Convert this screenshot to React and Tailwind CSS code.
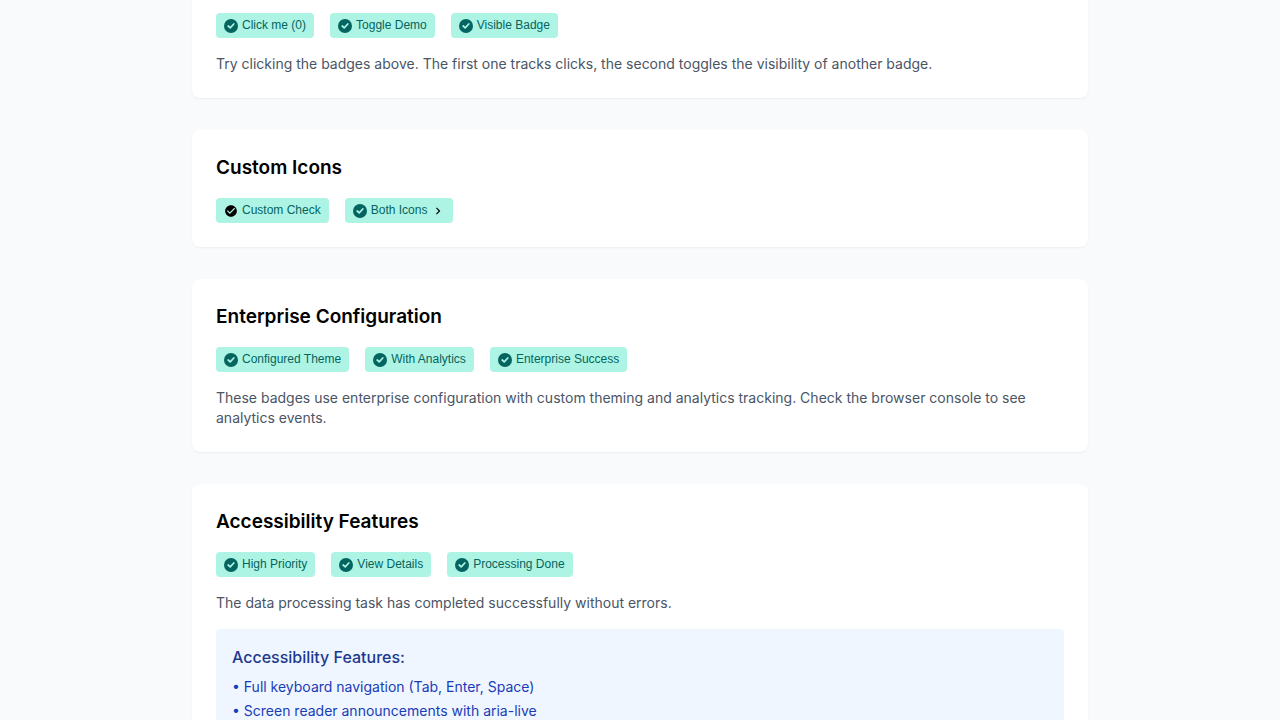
import { useState } from 'react';

function SuccessIcon() {
  return (
    <svg className="size-3.5 shrink-0" viewBox="0 0 14 14" aria-hidden="true">
      <circle cx="7" cy="7" r="7" fill="#04645f" />
      <path d="M4.2 7 6.2 8.8 9.8 5" fill="none" stroke="#aef4e4" strokeWidth="1.75" strokeLinecap="round" strokeLinejoin="round" />
    </svg>
  );
}

function CheckCircle() {
  return (
    <svg className="size-3.5 shrink-0" viewBox="0 0 24 24" fill="#000" aria-hidden="true">
      <path d="M12 2C6.48 2 2 6.48 2 12s4.48 10 10 10 10-4.48 10-10S17.52 2 12 2zm-2 15-5-5 1.41-1.41L10 14.17l7.59-7.59L19 8l-9 9z" />
    </svg>
  );
}

function ChevronRight() {
  return (
    <svg className="size-3.5 shrink-0" viewBox="0 0 24 24" fill="#000" aria-hidden="true">
      <path d="M10 6 8.59 7.41 13.17 12l-4.58 4.59L10 18l6-6z" />
    </svg>
  );
}

const badgeClass =
  "inline-flex h-[25px] items-center gap-1 rounded-[4px] bg-[#aef4e4] px-2 font-['Liberation_Sans',Arial,sans-serif] text-xs text-[#04645f]";

function Badge({ children, icon = <SuccessIcon />, endIcon, onClick }) {
  const content = (
    <>
      <span className="pt-px">{icon}</span>
      <span className="pb-px">{children}</span>
      {endIcon && <span className="pt-px">{endIcon}</span>}
    </>
  );
  return onClick ? (
    <button type="button" onClick={onClick} className={badgeClass}>{content}</button>
  ) : (
    <span className={badgeClass}>{content}</span>
  );
}

function Card({ title, children }) {
  return (
    <section className="rounded-lg bg-white p-6 shadow-xs">
      <h2 className="mb-4 text-[19px] leading-7 font-semibold text-black">{title}</h2>
      {children}
    </section>
  );
}

function BadgeRow({ children }) {
  return <div className="flex flex-wrap gap-4">{children}</div>;
}

function Note({ children }) {
  return <p className="mt-4 text-sm text-gray-600">{children}</p>;
}

export default function App() {
  const [clicks, setClicks] = useState(0);
  const [visible, setVisible] = useState(true);
  const log = (name) => () => console.log('badge', name);

  return (
    <div className="min-h-screen bg-gray-50 font-[Inter,sans-serif]">
      <main className="mx-auto flex max-w-4xl flex-col gap-8">
        <section className="rounded-b-lg bg-white px-6 pt-[13px] pb-6 shadow-xs">
          <BadgeRow>
            <Badge onClick={() => setClicks(clicks + 1)}>Click me ({clicks})</Badge>
            <Badge onClick={() => setVisible(!visible)}>Toggle Demo</Badge>
            {visible && <Badge>Visible Badge</Badge>}
          </BadgeRow>
          <Note>
            Try clicking the badges above. The first one tracks clicks, the second toggles the visibility of another badge.
          </Note>
        </section>

        <Card title="Custom Icons">
          <BadgeRow>
            <Badge icon={<CheckCircle />}>Custom Check</Badge>
            <Badge endIcon={<ChevronRight />}>Both Icons</Badge>
          </BadgeRow>
        </Card>

        <Card title="Enterprise Configuration">
          <BadgeRow>
            <Badge>Configured Theme</Badge>
            <Badge onClick={log('analytics')}>With Analytics</Badge>
            <Badge>Enterprise Success</Badge>
          </BadgeRow>
          <Note>
            These badges use enterprise configuration with custom theming and analytics tracking. Check the browser console to see analytics events.
          </Note>
        </Card>

        <Card title="Accessibility Features">
          <BadgeRow>
            <Badge>High Priority</Badge>
            <Badge onClick={log('details')}>View Details</Badge>
            <Badge>Processing Done</Badge>
          </BadgeRow>
          <Note>The data processing task has completed successfully without errors.</Note>
          <div className="mt-4 rounded bg-blue-50 p-4">
            <h3 className="mb-2 font-medium text-blue-900">Accessibility Features:</h3>
            <ul className="space-y-1 text-sm text-blue-800">
              <li>• Full keyboard navigation (Tab, Enter, Space)</li>
              <li>• Screen reader announcements with aria-live</li>
            </ul>
          </div>
        </Card>
      </main>
    </div>
  );
}
